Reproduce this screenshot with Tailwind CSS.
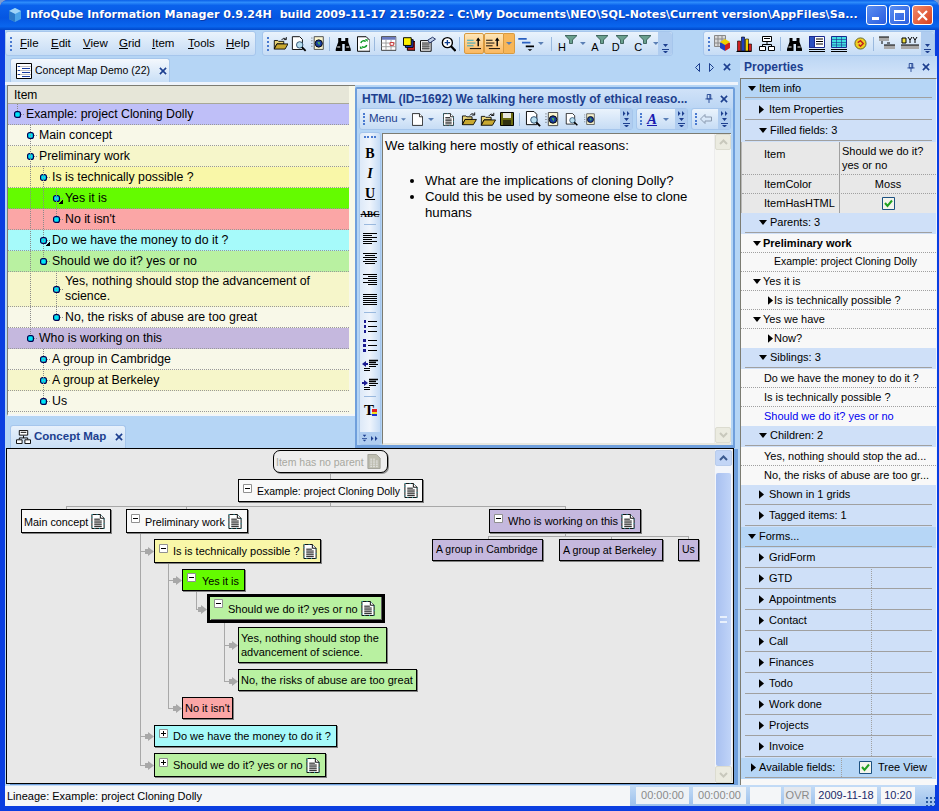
<!doctype html>
<html lang="en">
<head>
<meta charset="UTF-8">
<title>InfoQube Information Manager</title>
<script src="https://cdn.jsdelivr.net/npm/@tailwindcss/browser@4"></script>
</head>
<body class="w-[939px] h-[811px] overflow-hidden bg-[#7f9ccf] font-['Liberation_Sans',Arial,sans-serif] text-[10.5px] text-black">

<!-- Icon sprites -->
<svg class="hidden">
  <symbol id="tri-r" viewBox="0 0 6 10"><path d="M0 0l6 5-6 5z"/></symbol>
  <symbol id="tri-d" viewBox="0 0 10 6"><path d="M0 0h10L5 6z"/></symbol>
  <symbol id="caret" viewBox="0 0 6 3"><path d="M0 0h6L3 3z" fill="#5a7fb5"/></symbol>
  <symbol id="over" viewBox="0 0 7 9"><path d="M1 0h5L3.5 3zM0 5h7v1H0zM1 7h5L3.5 9.500z" fill="#1d3f8f"/></symbol>
  <symbol id="more" viewBox="0 0 7 5"><path d="M0 0l2.5 2.5L0 5zM4 0l2.5 2.5L4 5z" fill="#1d3f8f"/></symbol>
  <symbol id="x" viewBox="0 0 9 9"><path d="M1 1l7 7M8 1L1 8" stroke="#1d3f8f" stroke-width="1.8" fill="none"/></symbol>
  <symbol id="pin" viewBox="0 0 9 10"><path d="M2.5.5h4v5h-4zM.5 5.5h8M4.5 6v4M5.5 1v4" stroke="#1d3f8f" fill="none"/></symbol>
  <symbol id="doc" viewBox="0 0 14 16">
    <path d="M.5.5h9l4 4v11H.5z" fill="#fff" stroke="#000"/>
    <path d="M.5.5h9l4 4v11H.5z" fill="none" stroke="#20b0c0" stroke-dasharray="1 4"/>
    <path d="M9.5.5v4h4" fill="#fff" stroke="#000"/>
    <path d="M3 5.5h6M3 7.5h8M3 9.5h8M3 11.5h8M3 13.5h8" stroke="#000"/>
  </symbol>
  <symbol id="doc-g" viewBox="0 0 14 16">
    <path d="M.5.5h9l4 4v11H.5z" fill="#bdbdb0" stroke="#a0a098"/>
    <path d="M3 5.5h6M3 7.5h8M3 9.5h8M3 11.5h8M3 13.5h8" stroke="#e8e8e8" stroke-dasharray="2 1"/>
  </symbol>
  <symbol id="open" viewBox="0 0 18 16">
    <path d="M1.5 4.5h4l1 1h6v3h-8l-3 6z" fill="#e8d47a" stroke="#000"/>
    <path d="M4.5 8.5h13l-3.500 6H1.5z" fill="#c8a830" stroke="#000"/>
    <path d="M10 4c1.5-2.5 3.500-2.5 5-1M15.5.5v3h-3" fill="none" stroke="#000"/>
  </symbol>
  <symbol id="preview" viewBox="0 0 18 17">
    <path d="M1.5.5h8l3 3v11h-11z" fill="#fff" stroke="#000"/>
    <circle cx="9.5" cy="9.5" r="3.5" fill="#b8dff0" stroke="#2a4a6a"/>
    <path d="M12 12l4 4" stroke="#000" stroke-width="2"/>
  </symbol>
  <symbol id="globe-doc" viewBox="0 0 17 16">
    <path d="M.5 2h1M.5 5h1M.5 8h1M.5 11h1" stroke="#444"/>
    <path d="M3.5.5h10v14h-10z" fill="#fbf6d0" stroke="#444"/>
    <circle cx="8.5" cy="8" r="4" fill="#1a3ea0" stroke="#000"/>
    <path d="M7 6l3 1-1 3z" fill="#50c050"/>
  </symbol>
  <symbol id="binoc" viewBox="0 0 16 16">
    <path d="M3 2h3v3h4V2h3v4l2.5 7v2h-6V8H7v7H.5v-2L3 6z" fill="#000"/>
    <path d="M2 11h3M11 11h3" stroke="#fff"/>
  </symbol>
  <symbol id="doc-sync" viewBox="0 0 14 16">
    <path d="M.5.5h9l4 4v11H.5z" fill="#fff" stroke="#000"/>
    <path d="M4 7a3 3 0 0 1 5-1.5M10 9a3 3 0 0 1-5 1.5" stroke="#0a9a20" stroke-width="1.5" fill="none"/>
    <path d="M8 3h3v3zM6 13H3v-3z" fill="#0a9a20"/>
  </symbol>
  <symbol id="table" viewBox="0 0 17 16">
    <path d="M.5.5h16v15H.5z" fill="#fff" stroke="#333"/>
    <path d="M1 1h15v3H1z" fill="#6a7ac0"/>
    <path d="M.5 7.5h16M.5 11.5h16M5.5 4v11M11 4v11" stroke="#999"/>
    <path d="M10 7h4v3h-4z" fill="#fff" stroke="#c02020"/>
  </symbol>
  <symbol id="stack" viewBox="0 0 13 14">
    <path d="M4.5 4.5h8v9h-8z" fill="#d02020" stroke="#000"/>
    <path d="M2.5 2.5h8v8h-8z" fill="#2040d0" stroke="#000"/>
    <path d="M.5.5h8v8h-8z" fill="#fff000" stroke="#000"/>
  </symbol>
  <symbol id="props" viewBox="0 0 17 16">
    <path d="M.5 4.5h11v11H.5z" fill="#fff" stroke="#000"/>
    <path d="M2 7h8M2 9h8M2 11h8M2 13h8" stroke="#000"/>
    <path d="M8 4l5-3 3 2-6 4z" fill="#c0d0e8" stroke="#203060"/>
  </symbol>
  <symbol id="zoom" viewBox="0 0 17 17">
    <circle cx="7" cy="7" r="5.5" fill="#fff" stroke="#000" stroke-width="1.5"/>
    <path d="M4 7h6M7 4v6" stroke="#0a3a8a" stroke-width="1.5"/>
    <path d="M11 11l5 5" stroke="#000" stroke-width="2.5"/>
  </symbol>
  <symbol id="list-up" viewBox="0 0 16 14">
    <path d="M0 3.5h7M0 6.5h9M0 9.5h7" stroke="#20a0c0"/>
    <path d="M3 12.5h12" stroke="#000"/>
    <path d="M12 10V2" stroke="#000" stroke-width="1.5"/><path d="M9.5 4L12 .5 14.5 4z"/>
  </symbol>
  <symbol id="list-up2" viewBox="0 0 16 14">
    <path d="M0 3.5h7M0 6.5h9M0 9.5h7" stroke="#000"/>
    <path d="M3 12.5h12" stroke="#000"/>
    <path d="M12 10V2" stroke="#000" stroke-width="1.5"/><path d="M9.5 4L12 .5 14.5 4z"/>
  </symbol>
  <symbol id="steps" viewBox="0 0 17 15">
    <path d="M0 1h9v2H0z" fill="#2a60c0"/><path d="M4 5h9v2H4z" fill="#2a60c0"/><path d="M8 9h9v2H8z" fill="#000"/><path d="M10 13h5l-2.5 2z"/>
  </symbol>
  <symbol id="filter" viewBox="0 0 12 9"><path d="M0 .5h12L7.5 5v3.5h-3V5z" fill="#6aa08e" stroke="#2a5048" stroke-width=".8"/></symbol>
  <symbol id="cube" viewBox="0 0 18 17">
    <path d="M.5.5h11v11H.5zM4 .5v11M8 .5v11M.5 4h11M.5 8h11" fill="#d8d8d8" stroke="#888"/>
    <path d="M11 5l5 3v5l-5 3z" fill="#d02020"/><path d="M11 5l-5 3v5l5 3z" fill="#2040c0"/><path d="M11 4l5 3-5 3-5-3z" fill="#f0d000"/>
  </symbol>
  <symbol id="bars" viewBox="0 0 16 16">
    <path d="M.5 15.5h15" stroke="#000"/>
    <path d="M1.5 5h3v10h-3z" fill="#d02020" stroke="#000" stroke-width=".6"/>
    <path d="M5.5 1h3v14h-3z" fill="#2040c0" stroke="#000" stroke-width=".6"/>
    <path d="M9.5 3h3v12h-3z" fill="#f0d000" stroke="#000" stroke-width=".6"/>
    <path d="M12.5 8h3v7h-3z" fill="#d02020" stroke="#000" stroke-width=".6"/>
  </symbol>
  <symbol id="org" viewBox="0 0 16 15">
    <path d="M3.5.5h9v5h-9zM.5 10.5h6v4h-6zM9.5 10.5h6v4h-6z" fill="#fff" stroke="#000"/>
    <path d="M8 6v2.5M3.5 10V8.5h9V10M5 2.5h6" stroke="#000" fill="none"/>
  </symbol>
  <symbol id="form" viewBox="0 0 16 16">
    <path d="M.5.5h15v11H.5z" fill="#fff" stroke="#1a2a90"/>
    <path d="M.5.5h5v11h-5z" fill="#2a50c0" stroke="#1a2a90"/>
    <path d="M7 3h7M7 5.5h7M7 8h7M0 13.5h16M0 15.5h16" stroke="#000"/>
  </symbol>
  <symbol id="grid-c" viewBox="0 0 16 16">
    <path d="M.5.5h15v11H.5z" fill="#40e0e0" stroke="#1a2a90"/>
    <path d="M.5 3.5h15M.5 6.5h15M.5 9h15M5.5 0v11M10.5 0v11" stroke="#1a2a90" stroke-width=".6"/>
    <path d="M0 13.5h16M0 15.5h16" stroke="#000"/>
  </symbol>
  <symbol id="coin" viewBox="0 0 14 14">
    <circle cx="7" cy="7" r="6" fill="#f0d020" stroke="#606020"/>
    <path d="M4 6l3-2 3 3-3 3-2-2" stroke="#c02020" stroke-width="1.5" fill="none"/>
  </symbol>
  <symbol id="fld-a" viewBox="0 0 16 15">
    <path d="M0 1h10v4H0zM5 9h11v4H5z" fill="#a8a8a8"/><path d="M0 1h10M5 9h11M3 5v3M8 7h3" stroke="#000"/>
  </symbol>
  <symbol id="fld-b" viewBox="0 0 18 15">
    <path d="M0 9h18v4H0z" fill="#a8a8a8"/><path d="M0 9h18" stroke="#000"/>
    <path d="M1 7V2h4v5z" fill="#f0e040" stroke="#000"/>
    <path d="M7 1l2 3 2-3M9 4v3M12 1l2 3 2-3M14 4v3" stroke="#000" fill="none"/>
  </symbol>
  <symbol id="tabgrid" viewBox="0 0 16 16">
    <path d="M.5.5h15v15H.5z" fill="#fff" stroke="#000"/>
    <path d="M1 3.5h14M1 7.5h14M1 11.5h14" stroke="#c0c0c0"/>
    <path d="M2 3.5h2M6 5.5h8M2 7.5h2M6 9.5h8M2 11.5h2M6 13.5h8" stroke="#1a3ea0" stroke-width="1.2"/>
  </symbol>
  <symbol id="page" viewBox="0 0 14 16">
    <path d="M.5.5h9l4 4v11H.5z" fill="#fff" stroke="#000"/><path d="M9.5.5v4h4" fill="#fff" stroke="#000"/>
  </symbol>
  <symbol id="tree-dot" viewBox="0 0 7 7"><rect x=".6" y=".6" width="5.8" height="5.8" rx="2" fill="#00e4f8" stroke="#000050" stroke-width="1.2"/></symbol>
  <symbol id="minus" viewBox="0 0 9 9"><path d="M.5.5h8v8h-8z" fill="#fff" stroke="#909090"/><path d="M2 4.5h5" stroke="#000"/></symbol>
  <symbol id="plus" viewBox="0 0 9 9"><path d="M.5.5h8v8h-8z" fill="#fff" stroke="#909090"/><path d="M2 4.5h5M4.5 2v5" stroke="#000"/></symbol>
  <symbol id="check" viewBox="0 0 13 13"><path d="M.5.5h12v12H.5z" fill="#f4f4ec" stroke="#1c5180"/><path d="M3 6l2.5 3L10 3.5" stroke="#21a121" stroke-width="2" fill="none"/></symbol>
  <symbol id="chev-u" viewBox="0 0 9 6"><path d="M1 5l3.5-3.5L8 5" stroke="currentColor" stroke-width="2" fill="none"/></symbol>
  <symbol id="chev-d" viewBox="0 0 9 6"><path d="M1 1l3.5 3.5L8 1" stroke="currentColor" stroke-width="2" fill="none"/></symbol>
  <symbol id="al-l" viewBox="0 0 14 12"><path d="M0 .5h14M0 2.5h9M0 4.5h14M0 6.5h9M0 8.5h14M0 10.5h9" stroke="#000"/></symbol>
  <symbol id="al-c" viewBox="0 0 14 12"><path d="M0 .5h14M2 2.5h10M0 4.5h14M2 6.5h10M0 8.5h14M2 10.5h10" stroke="#000"/></symbol>
  <symbol id="al-r" viewBox="0 0 14 12"><path d="M0 .5h14M5 2.5h9M0 4.5h14M5 6.5h9M0 8.5h14M5 10.5h9" stroke="#000"/></symbol>
  <symbol id="al-j" viewBox="0 0 14 12"><path d="M0 .5h14M0 2.5h14M0 4.5h14M0 6.5h14M0 8.5h14M0 10.5h14" stroke="#000"/></symbol>
  <symbol id="numlist" viewBox="0 0 14 13"><path d="M1 0h2v3H1zM1 5h2v3H1zM1 10h2v3H1z" fill="#1a1a90"/><path d="M5 1.5h9M5 6.5h9M5 11.5h9" stroke="#000"/></symbol>
  <symbol id="bullist" viewBox="0 0 14 13"><path d="M0 0h3v3H0zM0 5h3v3H0zM0 10h3v3H0z" fill="#1a1a90"/><path d="M5 1.5h9M5 6.5h9M5 11.5h9" stroke="#000"/></symbol>
  <symbol id="outdent" viewBox="0 0 16 14"><path d="M7 2.5h9M7 4.5h7" stroke="#000" stroke-width="1.5"/><path d="M7 6.5h9M7 8.5h7M2 10.5h6M2 12.5h6" stroke="#000"/><path d="M0 6l4-3v2h2v2H4v2z" fill="#1a1a90"/></symbol>
  <symbol id="indent" viewBox="0 0 16 14"><path d="M7 2.5h9M7 4.5h7" stroke="#000" stroke-width="1.5"/><path d="M7 6.5h9M7 8.5h7M2 10.5h6M2 12.5h6" stroke="#000"/><path d="M6 6L2 3v2H0v2h2v2z" fill="#1a1a90"/></symbol>
</svg>

<div class="flex flex-col h-full rounded-t-[8px] bg-[#0a3ee0] overflow-hidden">

  <!-- Title bar -->
  <div class="h-[30px] flex items-center shrink-0 pl-[7px] pr-[6px] bg-[linear-gradient(#0a5fe8,#2d8cfb_8%,#0a62ec_18%,#0556e2_60%,#0a66ee_88%,#0046c8)]">
    <svg class="w-[16px] h-[16px] shrink-0" viewBox="0 0 16 16"><path d="M8 1l6 3v8l-6 3-6-3V4z" fill="#4aa3e8"/><path d="M8 1l6 3-6 3-6-3z" fill="#9fd4f8"/><path d="M8 7v8l-6-3V4z" fill="#2a78c8"/></svg>
    <div class="ml-[3px] flex-1 whitespace-nowrap text-white font-['DejaVu_Sans',sans-serif] font-bold text-[11.1px] [text-shadow:1px_1px_#0a3aa8]">InfoQube Information Manager 0.9.24H&nbsp; build 2009-11-17 21:50:22 - C:\My Documents\NEO\SQL-Notes\Current version\AppFiles\Sa...</div>
    <div class="flex gap-[2px] ml-[6px]">
      <div class="w-[21px] h-[20px] rounded-[3px] border border-white bg-[linear-gradient(135deg,#5a8ef0,#2a5de0)] flex items-end justify-start pl-[5px] pb-[4px]"><div class="w-[7px] h-[3px] bg-white"></div></div>
      <div class="w-[21px] h-[20px] rounded-[3px] border border-white bg-[linear-gradient(135deg,#5a8ef0,#2a5de0)] flex items-center justify-center"><div class="w-[11px] h-[11px] border border-white border-t-[3px]"></div></div>
      <div class="w-[21px] h-[20px] rounded-[3px] border border-white bg-[linear-gradient(135deg,#f08a6a,#d8401e)] flex items-center justify-center"><svg class="w-[11px] h-[11px]" viewBox="0 0 11 11"><path d="M1 1l9 9M10 1l-9 9" stroke="#fff" stroke-width="2.2"/></svg></div>
    </div>
  </div>

  <!-- Client area -->
  <div class="ml-[5px] mr-[4px] h-[776px] shrink-0 bg-[#b5d5f5] flex flex-col">

    <!-- Toolbars -->
    <div class="h-[26px] shrink-0 pt-[1px] flex items-start">
      <div class="w-[251px] h-[25px] rounded-[3px] border border-[#a6c6ec] bg-[linear-gradient(#eaf3fc,#c6dcf5)] flex items-center text-[11.5px]">
        <div class="w-[2px] h-[14px] ml-[4px] border-l-2 border-dotted border-[#4a7ad0]"></div>
        <span class="ml-[8px] w-[31px]"><u>F</u>ile</span>
        <span class="w-[32px]"><u>E</u>dit</span>
        <span class="w-[36px]"><u>V</u>iew</span>
        <span class="w-[33px]"><u>G</u>rid</span>
        <span class="w-[36px]"><u>I</u>tem</span>
        <span class="w-[38px]"><u>T</u>ools</span>
        <span><u>H</u>elp</span>
      </div>
      <div class="ml-[6px] w-[411px] h-[25px] rounded-[3px] border border-[#a6c6ec] bg-[linear-gradient(#eaf3fc,#c6dcf5)] flex items-center relative">
        <div class="w-[2px] h-[14px] ml-[4px] border-l-2 border-dotted border-[#4a7ad0]"></div>
        <svg class="ml-[4px] w-[16px] h-[15px]"><use href="#open"/></svg>
        <svg class="ml-[3px] w-[17px] h-[16px]"><use href="#preview"/></svg>
        <svg class="ml-[3px] w-[16px] h-[15px]"><use href="#globe-doc"/></svg>
        <div class="ml-[3px] w-px h-[14px] bg-[#9ab9de]"></div>
        <svg class="ml-[5px] w-[17px] h-[16px]"><use href="#binoc"/></svg>
        <svg class="ml-[5px] w-[14px] h-[16px]"><use href="#doc-sync"/></svg>
        <div class="ml-[4px] w-px h-[14px] bg-[#9ab9de]"></div>
        <svg class="ml-[6px] w-[16px] h-[15px]"><use href="#table"/></svg>
        <svg class="ml-[6px] w-[13px] h-[14px]"><use href="#stack"/></svg>
        <svg class="ml-[5px] w-[17px] h-[16px]"><use href="#props"/></svg>
        <svg class="ml-[4px] w-[16px] h-[16px]"><use href="#zoom"/></svg>
        <div class="ml-[3px] w-px h-[14px] bg-[#9ab9de]"></div>
        <div class="ml-[4px] w-[20px] h-[21px] rounded-[2px] border border-[#d89a40] bg-[linear-gradient(#fde6b8,#fbb860)] flex items-center justify-center"><svg class="w-[15px] h-[13px]"><use href="#list-up"/></svg></div>
        <div class="w-[21px] h-[21px] rounded-l-[2px] border border-[#d89a40] bg-[linear-gradient(#fde6b8,#fbb860)] flex items-center justify-center"><svg class="w-[15px] h-[13px]"><use href="#list-up2"/></svg></div>
        <div class="w-[11px] h-[21px] rounded-r-[2px] border border-l-0 border-[#d89a40] bg-[#f7b658] flex items-center justify-center"><svg class="w-[6px] h-[3px]"><use href="#caret"/></svg></div>
        <svg class="ml-[3px] w-[17px] h-[14px]"><use href="#steps"/></svg>
        <svg class="ml-[4px] w-[6px] h-[3px]"><use href="#caret"/></svg>
        <div class="ml-[7px] w-px h-[14px] bg-[#9ab9de]"></div>
        <div class="ml-[6px] w-[20px] h-[18px] relative"><svg class="absolute right-0 top-0 w-[12px] h-[9px]"><use href="#filter"/></svg><span class="absolute left-0 bottom-0 text-[11px] leading-none">H</span></div>
        <svg class="ml-[3px] w-[6px] h-[3px]"><use href="#caret"/></svg>
        <div class="ml-[5px] w-[17px] h-[18px] relative"><svg class="absolute right-0 top-0 w-[12px] h-[9px]"><use href="#filter"/></svg><span class="absolute left-0 bottom-0 text-[11px] leading-none">A</span></div>
        <div class="ml-[4px] w-[17px] h-[18px] relative"><svg class="absolute right-0 top-0 w-[12px] h-[9px]"><use href="#filter"/></svg><span class="absolute left-0 bottom-0 text-[11px] leading-none">D</span></div>
        <div class="ml-[6px] w-[17px] h-[18px] relative"><svg class="absolute right-0 top-0 w-[12px] h-[9px]"><use href="#filter"/></svg><span class="absolute left-0 bottom-0 text-[11px] leading-none">C</span></div>
        <svg class="ml-[2px] w-[6px] h-[3px]"><use href="#caret"/></svg>
        <div class="ml-auto w-[14px] h-[23px] bg-[#b0cdf0] rounded-r-[3px] flex items-end justify-center pb-[2px]"><svg class="w-[7px] h-[9px]"><use href="#over"/></svg></div>
      </div>
      <div class="ml-[30px] w-[232px] h-[25px] rounded-[3px] border border-[#a6c6ec] bg-[linear-gradient(#eaf3fc,#c6dcf5)] flex items-center">
        <div class="w-[2px] h-[14px] ml-[4px] border-l-2 border-dotted border-[#4a7ad0]"></div>
        <svg class="ml-[4px] w-[18px] h-[17px]"><use href="#cube"/></svg>
        <svg class="ml-[4px] w-[16px] h-[16px]"><use href="#bars"/></svg>
        <svg class="ml-[7px] w-[16px] h-[15px]"><use href="#org"/></svg>
        <div class="ml-[5px] w-px h-[14px] bg-[#9ab9de]"></div>
        <svg class="ml-[5px] w-[17px] h-[16px]"><use href="#binoc"/></svg>
        <svg class="ml-[6px] w-[16px] h-[16px]"><use href="#form"/></svg>
        <svg class="ml-[6px] w-[16px] h-[16px]"><use href="#grid-c"/></svg>
        <svg class="ml-[7px] w-[13px] h-[13px]"><use href="#coin"/></svg>
        <div class="ml-[6px] w-px h-[14px] bg-[#9ab9de]"></div>
        <svg class="ml-[5px] w-[16px] h-[15px]"><use href="#fld-a"/></svg>
        <svg class="ml-[6px] w-[18px] h-[15px]"><use href="#fld-b"/></svg>
        <div class="ml-auto w-[13px] h-[23px] bg-[#b0cdf0] rounded-r-[3px] flex items-end justify-center pb-[2px]"><svg class="w-[7px] h-[9px]"><use href="#over"/></svg></div>
      </div>
    </div>

    <!-- Middle -->
    <div class="h-[729px] shrink-0 flex">
      <div class="w-[733px] shrink-0 flex flex-col">

        <div class="h-[392px] shrink-0 flex flex-col">
          <!-- Document tabs -->
          <div class="h-[29px] shrink-0 flex items-end pl-[5px] pr-[5px] border-b-[3px] border-[#eef4fc] relative">
            <div class="w-[160px] h-[24px] rounded-t-[3px] border border-b-0 border-[#a6c6ec] bg-[linear-gradient(#f4f8fd,#c9dff6)] flex items-center pl-[5px] text-[10.5px] whitespace-nowrap">
              <svg class="w-[16px] h-[16px]"><use href="#tabgrid"/></svg>
              <span class="ml-[3px]">Concept Map Demo (22)</span>
              <svg class="ml-[9px] w-[8px] h-[8px]"><use href="#x"/></svg>
            </div>
            <div class="ml-auto self-start h-[22px] flex items-center gap-[9px] pr-[2px]">
              <svg class="w-[5px] h-[9px]" viewBox="0 0 5 9"><path d="M4.5.5L.5 4.5l4 4z" fill="none" stroke="#1d3f8f"/></svg>
              <svg class="w-[5px] h-[9px]" viewBox="0 0 5 9"><path d="M.5.5l4 4-4 4z" fill="none" stroke="#1d3f8f"/></svg>
              <svg class="w-[8px] h-[8px]"><use href="#x"/></svg>
            </div>
          </div>

          <div class="flex-1 flex min-h-0">
            <!-- Item grid + map tab -->
            <div class="w-[350px] shrink-0 flex flex-col">
              <div class="ml-[2px] h-[331px] bg-[#f8f8e8] border-t border-l border-[#7c7c72] border-b-2 border-b-[#f4f6f8]">
                <div class="h-[18px] w-[341px] bg-[#e6e6d8] border-b border-[#a8a898] flex items-center pl-[6px] text-[12px]">Item</div>

                <div class="w-[341px] text-[12.3px] relative">
                  <div class="h-[21px] flex items-center bg-[#bfbff8] border-b border-dotted border-[#999] pl-[6px]"><svg class="w-[7px] h-[7px]"><use href="#tree-dot"/></svg><span class="ml-[5px]">Example: project Cloning Dolly</span></div>
                  <div class="h-[21px] flex items-center bg-[#f8f8e8] border-b border-dotted border-[#999] pl-[19px]"><svg class="w-[7px] h-[7px]"><use href="#tree-dot"/></svg><span class="ml-[5px]">Main concept</span></div>
                  <div class="h-[21px] flex items-center bg-[#f6f6ca] border-b border-dotted border-[#999] pl-[19px]"><svg class="w-[7px] h-[7px]"><use href="#tree-dot"/></svg><span class="ml-[5px]">Preliminary work</span></div>
                  <div class="h-[21px] flex items-center bg-[#f9f7a8] border-b border-dotted border-[#999] pl-[32px]"><svg class="w-[7px] h-[7px]"><use href="#tree-dot"/></svg><span class="ml-[5px]">Is is technically possible ?</span></div>
                  <div class="h-[21px] flex items-center bg-[#64fb00] border-b border-dotted border-[#999] pl-[45px]"><svg class="w-[7px] h-[7px]"><use href="#tree-dot"/></svg><span class="ml-[5px]">Yes it is</span></div>
                  <div class="h-[21px] flex items-center bg-[#fba6a6] border-b border-dotted border-[#999] pl-[45px]"><svg class="w-[7px] h-[7px]"><use href="#tree-dot"/></svg><span class="ml-[5px]">No it isn't</span></div>
                  <div class="h-[21px] flex items-center bg-[#a6fafa] border-b border-dotted border-[#999] pl-[32px]"><svg class="w-[7px] h-[7px]"><use href="#tree-dot"/></svg><span class="ml-[5px]">Do we have the money to do it ?</span></div>
                  <div class="h-[21px] flex items-center bg-[#b9f1a1] border-b border-dotted border-[#999] pl-[32px]"><svg class="w-[7px] h-[7px]"><use href="#tree-dot"/></svg><span class="ml-[5px]">Should we do it? yes or no</span></div>
                  <div class="h-[35px] flex items-center bg-[#f6f6ca] border-b border-dotted border-[#999] pl-[45px] pr-[20px]"><svg class="w-[7px] h-[7px] shrink-0"><use href="#tree-dot"/></svg><span class="ml-[5px] leading-[15px]">Yes, nothing should stop the advancement of science.</span></div>
                  <div class="h-[21px] flex items-center bg-[#f8f8e8] border-b border-dotted border-[#999] pl-[45px]"><svg class="w-[7px] h-[7px]"><use href="#tree-dot"/></svg><span class="ml-[5px]">No, the risks of abuse are too great</span></div>
                  <div class="h-[21px] flex items-center bg-[#c5b8de] border-b border-dotted border-[#999] pl-[19px]"><svg class="w-[7px] h-[7px]"><use href="#tree-dot"/></svg><span class="ml-[5px]">Who is working on this</span></div>
                  <div class="h-[21px] flex items-center bg-[#f8f8e8] border-b border-dotted border-[#999] pl-[32px]"><svg class="w-[7px] h-[7px]"><use href="#tree-dot"/></svg><span class="ml-[5px]">A group in Cambridge</span></div>
                  <div class="h-[21px] flex items-center bg-[#f6f6ca] border-b border-dotted border-[#999] pl-[32px]"><svg class="w-[7px] h-[7px]"><use href="#tree-dot"/></svg><span class="ml-[5px]">A group at Berkeley</span></div>
                  <div class="h-[21px] flex items-center bg-[#f8f8e8] border-b border-dotted border-[#999] pl-[32px]"><svg class="w-[7px] h-[7px]"><use href="#tree-dot"/></svg><span class="ml-[5px]">Us</span></div>
                  <!-- Tree connector lines, drawn over the rows -->
                  <svg class="absolute left-0 top-0 w-[341px] h-[309px]" viewBox="8 104 341 309" shape-rendering="crispEdges">
                    <path d="M17.5 104v8M30.5 125v210M43.5 166v92M43.5 349v52M56.5 187v30M56.5 271v46" stroke="#8a8a8a" stroke-dasharray="1 1" fill="none"/>
                    <path d="M21 114.5h4M34 135.5h4M34 156.5h4M47 177.5h4M60 198.5h4M60 219.5h4M47 240.5h4M47 261.5h4M60 289.5h4M60 317.5h4M34 338.5h4M47 359.5h4M47 380.5h4M47 401.5h4" stroke="#8a8a8a" stroke-dasharray="1 1" fill="none"/>
                    <path d="M62.5 199.5v4h-4zM49.5 241.5v4h-4z" fill="#000"/>
                  </svg>
                </div>
              </div>
              <!-- Concept Map tab -->
              <div class="h-[32px] flex items-end pl-[5px]">
                <div class="w-[116px] h-[23px] rounded-t-[3px] border border-b-0 border-[#a6c6ec] bg-[linear-gradient(#e8f1fb,#c9dff6)] flex items-center pl-[5px] text-[#1d3f8f] font-bold text-[11.5px]">
                  <svg class="w-[15px] h-[14px]"><use href="#org"/></svg>
                  <span class="ml-[3px]">Concept Map</span>
                  <svg class="ml-[9px] w-[8px] h-[8px]"><use href="#x"/></svg>
                </div>
              </div>
            </div>

            <!-- HTML pane -->
            <div class="w-[380px] shrink-0 mt-[2px] border-2 border-b-[3px] border-[#6f9fdc] rounded-t-[2px] flex flex-col">
              <div class="h-[19px] shrink-0 flex items-center pl-[5px] pr-[5px] bg-[linear-gradient(#d0e2f8,#bcd6f4)] font-bold text-[12px] text-[#1d3f8f] whitespace-nowrap">
                <span class="flex-1 overflow-hidden">HTML (ID=1692) We talking here mostly of ethical reaso...</span>
                <svg class="ml-[6px] w-[8px] h-[9px]"><use href="#pin"/></svg>
                <svg class="ml-[7px] w-[8px] h-[8px]"><use href="#x"/></svg>
              </div>
              <div class="h-[23px] shrink-0 flex pl-[2px] gap-[3px] pb-[1px]">
                <div class="w-[274px] rounded-[3px] border border-[#a6c6ec] bg-[linear-gradient(#eaf3fc,#c6dcf5)] flex items-center relative">
                  <div class="w-[2px] h-[12px] ml-[3px] border-l-2 border-dotted border-[#4a7ad0]"></div>
                  <span class="ml-[4px] text-[#1d3f8f] text-[11.5px]">Menu</span>
                  <svg class="ml-[3px] w-[5px] h-[3px]"><use href="#caret"/></svg>
                  <svg class="ml-[6px] w-[11px] h-[13px]"><use href="#page"/></svg>
                  <svg class="ml-[5px] w-[6px] h-[3px]"><use href="#caret"/></svg>
                  <svg class="ml-[9px] w-[11px] h-[13px]"><use href="#doc"/></svg>
                  <svg class="ml-[7px] w-[16px] h-[14px]"><use href="#open"/></svg>
                  <svg class="ml-[3px] w-[16px] h-[15px]"><use href="#open"/></svg>
                  <svg class="ml-[4px] w-[14px] h-[14px]" viewBox="0 0 14 14"><path d="M.5.5h13v13H.5z" fill="#6a6a10" stroke="#000"/><path d="M3 1h8v5H3z" fill="#e8e8e0"/><path d="M3 8h8v5H3z" fill="#303010"/></svg>
                  <div class="ml-[5px] w-px h-[13px] bg-[#9ab9de]"></div>
                  <svg class="ml-[5px] w-[17px] h-[16px]"><use href="#preview"/></svg>
                  <svg class="ml-[3px] w-[16px] h-[15px]"><use href="#globe-doc"/></svg>
                  <svg class="ml-[4px] w-[14px] h-[13px]"><use href="#preview"/></svg>
                  <svg class="ml-[5px] w-[13px] h-[15px]"><use href="#globe-doc"/></svg>
                  <div class="ml-auto w-[12px] h-full bg-[#b0cdf0] flex flex-col items-center justify-between py-[2px]"><svg class="w-[7px] h-[5px]"><use href="#more"/></svg><svg class="w-[7px] h-[9px]"><use href="#over"/></svg></div>
                </div>
                <div class="w-[52px] rounded-[3px] border border-[#a6c6ec] bg-[linear-gradient(#eaf3fc,#c6dcf5)] flex items-center">
                  <div class="w-[2px] h-[12px] ml-[3px] border-l-2 border-dotted border-[#4a7ad0]"></div>
                  <span class="ml-[5px] text-[#1a1ab0] font-['Liberation_Serif',serif] italic font-bold text-[15px] leading-none underline">A</span>
                  <svg class="ml-[6px] w-[6px] h-[3px]"><use href="#caret"/></svg>
                  <div class="ml-auto w-[12px] h-full bg-[#b0cdf0] flex flex-col items-center justify-between py-[2px]"><svg class="w-[7px] h-[5px]"><use href="#more"/></svg><svg class="w-[7px] h-[9px]"><use href="#over"/></svg></div>
                </div>
                <div class="w-[40px] rounded-[3px] border border-[#a6c6ec] bg-[linear-gradient(#eaf3fc,#c6dcf5)] flex items-center">
                  <div class="w-[2px] h-[12px] ml-[3px] border-l-2 border-dotted border-[#4a7ad0]"></div>
                  <svg class="ml-[3px] w-[12px] h-[10px]" viewBox="0 0 12 10"><path d="M5 .5L.5 5 5 9.5V7h6.5V3H5z" fill="none" stroke="#8a9ab0"/></svg>
                  <div class="ml-auto w-[12px] h-full bg-[#b0cdf0] flex flex-col items-center justify-between py-[2px]"><svg class="w-[7px] h-[5px]"><use href="#more"/></svg><svg class="w-[7px] h-[9px]"><use href="#over"/></svg></div>
                </div>
              </div>
              <div class="flex-1 flex min-h-0 pl-[2px] pr-[2px]">
                <!-- Format toolbar -->
                <div class="w-[22px] shrink-0 mt-[1px] rounded-[3px] border border-[#a6c6ec] bg-[linear-gradient(90deg,#dde9f8,#eef4fc,#c6dcf5)] flex flex-col items-center relative">
                  <div class="mt-[3px] h-[2px] w-[12px] border-t-2 border-dotted border-[#4a7ad0]"></div>
                  <span class="mt-[8px] h-[20px] font-['Liberation_Serif',serif] font-bold text-[14px] leading-[16px]">B</span>
                  <span class="h-[20px] font-['Liberation_Serif',serif] font-bold italic text-[14px] leading-[16px]">I</span>
                  <span class="h-[20px] font-['Liberation_Serif',serif] font-bold underline text-[14px] leading-[16px]">U</span>
                  <span class="h-[14px] font-['Liberation_Serif',serif] font-bold line-through text-[9px] leading-[16px]">ABC</span>
                  <div class="mt-[4px] w-[12px] h-px bg-[#9ab9de]"></div>
                  <svg class="mt-[8px] w-[14px] h-[12px]"><use href="#al-l"/></svg>
                  <svg class="mt-[8px] w-[14px] h-[12px]"><use href="#al-c"/></svg>
                  <svg class="mt-[9px] w-[14px] h-[12px]"><use href="#al-r"/></svg>
                  <svg class="mt-[8px] w-[14px] h-[12px]"><use href="#al-j"/></svg>
                  <div class="mt-[6px] w-[12px] h-px bg-[#9ab9de]"></div>
                  <svg class="mt-[7px] w-[14px] h-[13px]"><use href="#numlist"/></svg>
                  <svg class="mt-[6px] w-[14px] h-[13px]"><use href="#bullist"/></svg>
                  <svg class="mt-[6px] w-[16px] h-[14px]"><use href="#outdent"/></svg>
                  <svg class="mt-[5px] w-[16px] h-[14px]"><use href="#indent"/></svg>
                  <div class="mt-[5px] w-[12px] h-px bg-[#9ab9de]"></div>
                  <span class="mt-[5px] h-[18px] ml-[-2px] font-['Liberation_Serif',serif] font-bold text-[15px] leading-[16px] relative">T<span class="absolute left-[8px] top-[7px] w-[5px] h-[7px] bg-[linear-gradient(#e02020_40%,#f0e020_40%,#f0e020_70%,#2030d0_70%)]"></span></span>
                  <div class="absolute left-0 right-0 bottom-0 h-[12px] bg-[#b0cdf0] flex items-center justify-center gap-[4px]"><svg class="w-[5px] h-[8px]"><use href="#over"/></svg><svg class="w-[7px] h-[5px]"><use href="#more"/></svg></div>
                </div>
                <!-- Editor -->
                <div class="ml-[1px] flex-1 mt-[2px] border-l border-t border-[#7c7c72] bg-[#f8f8f8] flex border-b-2 border-b-[#e8e8e0]">
                  <div class="flex-1 pl-[2px] text-[13.2px] leading-[16px]">
                    <p class="mt-[4px]">We talking here mostly of ethical reasons:</p>
                    <ul class="mt-[19px] ml-[40px] list-disc">
                      <li>What are the implications of cloning Dolly?</li>
                      <li class="pr-[8px]">Could this be used by someone else to clone humans</li>
                    </ul>
                  </div>
                  <div class="w-[17px] shrink-0 border-l border-[#ececec] bg-[#f6f6f2] flex flex-col justify-between">
                    <div class="h-[16px] rounded-[2px] border border-[#dcdcd0] bg-[#ebebe0] flex items-center justify-center text-[#c8c8bc]"><svg class="w-[9px] h-[6px]"><use href="#chev-u"/></svg></div>
                    <div class="h-[16px] rounded-[2px] border border-[#dcdcd0] bg-[#ebebe0] flex items-center justify-center text-[#c8c8bc]"><svg class="w-[9px] h-[6px]"><use href="#chev-d"/></svg></div>
                  </div>
                </div>
              </div>
            </div>
          </div>
        </div>

        <!-- Concept map -->
        <div class="ml-[1px] h-[336px] w-[728px] shrink-0 relative overflow-visible border border-black bg-[#e8e8e8] flex justify-end text-[11px] shadow-[4px_1px_0_#6f9fdc]">
          <svg class="absolute left-0 top-0 w-[709px] h-[334px]" viewBox="7 449 709 334" shape-rendering="crispEdges">
            <path d="M330 473v6M330 502v4M66 506.5h499M66 506v3M186 506v3M565 506v3M140 533v232M168 563v145M196 591v18M224 623v58M565 533v3M488 536.5h200M488 536v3M611 536v3M688 536v3" stroke="#a8a8a8" fill="none"/>
            <path d="M140 551.5h9M140 736.5h9M140 765.5h9M168 580.5h9M168 708.5h9M196 609.5h6M224 645.5h9M224 681.5h9" stroke="#a8a8a8" fill="none"/>
            <path d="M145 549h3v5h-3zM145 734h3v5h-3zM145 763h3v5h-3zM173 578h3v5h-3zM173 706h3v5h-3zM198 607h3v5h-3zM229 643h3v5h-3zM229 679h3v5h-3z" fill="#a8a8a8"/>
            <g fill="#a8a8a8" shape-rendering="auto">
              <path d="M148 547l6 4.5-6 4.5zM148 732l6 4.5-6 4.5zM148 761l6 4.5-6 4.5zM176 576l6 4.5-6 4.5zM176 704l6 4.5-6 4.5zM201 605l6 4.5-6 4.5zM232 641l6 4.5-6 4.5zM232 677l6 4.5-6 4.5z"/>
            </g>
          </svg>

          <div class="absolute left-[266px] top-[1px] w-[115px] h-[23px] rounded-[7px] border border-black bg-[#eeeeee] flex items-center pl-[2px] text-[10.5px] text-[#a8a8a0] shadow-[1px_1px_0_#909090]"><span class="pt-[2px] whitespace-nowrap">Item has no parent</span><svg class="ml-[3px] w-[14px] h-[15px]"><use href="#doc-g"/></svg></div>

          <div class="absolute left-[231px] top-[30px] w-[185px] h-[23px] border border-black bg-[#f8f8f8] shadow-[1px_1px_0_#808080] pl-[4px] flex items-center text-[10.5px]"><svg class="self-start mt-[4px] w-[9px] h-[9px] shrink-0"><use href="#minus"/></svg><span class="ml-[5px] pt-[2px] whitespace-nowrap">Example: project Cloning Dolly</span><svg class="ml-[4px] w-[14px] h-[15px]"><use href="#doc"/></svg></div>

          <div class="absolute left-[14px] top-[60px] w-[90px] h-[24px] border border-black bg-[#f8f8f8] shadow-[1px_1px_0_#808080] pl-[2px] flex items-center text-[10.8px]"><span class="pt-[2px] whitespace-nowrap">Main concept</span><svg class="ml-[3px] w-[14px] h-[15px]"><use href="#doc"/></svg></div>

          <div class="absolute left-[119px] top-[60px] w-[122px] h-[24px] border border-black bg-[#f8f8f8] shadow-[1px_1px_0_#808080] pl-[4px] flex items-center text-[10.8px]"><svg class="self-start mt-[4px] w-[9px] h-[9px] shrink-0"><use href="#minus"/></svg><span class="ml-[5px] pt-[2px] whitespace-nowrap">Preliminary work</span><svg class="ml-[3px] w-[14px] h-[15px]"><use href="#doc"/></svg></div>

          <div class="absolute left-[147px] top-[90px] w-[167px] h-[24px] border border-black bg-[#f9f7a8] shadow-[1px_1px_0_#808080] pl-[4px] flex items-center"><svg class="self-start mt-[4px] w-[9px] h-[9px] shrink-0"><use href="#minus"/></svg><span class="ml-[5px] whitespace-nowrap">Is is technically possible ?</span><svg class="ml-[3px] w-[14px] h-[15px]"><use href="#doc"/></svg></div>

          <div class="absolute left-[175px] top-[120px] w-[63px] h-[22px] border border-black bg-[#64fb00] shadow-[1px_1px_0_#808080] pl-[4px] flex items-center text-[10.8px]"><svg class="self-start mt-[3px] w-[9px] h-[9px] shrink-0"><use href="#minus"/></svg><span class="ml-[6px] pt-[2px] whitespace-nowrap">Yes it is</span></div>

          <div class="absolute left-[200px] top-[145px] w-[178px] h-[29px] border-[3px] border-black bg-[#b9f1a1] pl-[1px] flex items-center"><div class="w-full h-full border-b border-r border-[#606060] flex items-center pl-[3px]"><svg class="self-start mt-[2px] w-[9px] h-[9px] shrink-0"><use href="#minus"/></svg><span class="ml-[5px] pt-[2px] whitespace-nowrap">Should we do it? yes or no</span><svg class="ml-[3px] w-[14px] h-[15px]"><use href="#doc"/></svg></div></div>

          <div class="absolute left-[231px] top-[178px] w-[149px] h-[36px] border border-black bg-[#b9f1a1] shadow-[1px_1px_0_#808080] pl-[2px] leading-[14px] flex items-center"><span>Yes, nothing should stop the advancement of science.</span></div>

          <div class="absolute left-[231px] top-[220px] w-[179px] h-[22px] border border-black bg-[#b9f1a1] shadow-[1px_1px_0_#808080] pl-[2px] flex items-center"><span class="whitespace-nowrap">No, the risks of abuse are too great</span></div>

          <div class="absolute left-[175px] top-[248px] w-[51px] h-[22px] border border-black bg-[#fba6a6] shadow-[1px_1px_0_#808080] pl-[2px] flex items-center"><span class="whitespace-nowrap">No it isn't</span></div>

          <div class="absolute left-[147px] top-[276px] w-[183px] h-[22px] border border-black bg-[#a6fafa] shadow-[1px_1px_0_#808080] pl-[4px] flex items-center"><svg class="self-start mt-[3px] w-[9px] h-[9px] shrink-0"><use href="#plus"/></svg><span class="ml-[5px] whitespace-nowrap">Do we have the money to do it ?</span></div>

          <div class="absolute left-[147px] top-[304px] w-[172px] h-[24px] border border-black bg-[#b9f1a1] shadow-[1px_1px_0_#808080] pl-[4px] flex items-center"><svg class="self-start mt-[4px] w-[9px] h-[9px] shrink-0"><use href="#plus"/></svg><span class="ml-[5px] whitespace-nowrap">Should we do it? yes or no</span><svg class="ml-[3px] w-[14px] h-[15px]"><use href="#doc"/></svg></div>

          <div class="absolute left-[482px] top-[60px] w-[152px] h-[24px] border border-black bg-[#c5b8de] shadow-[1px_1px_0_#808080] pl-[4px] flex items-center"><svg class="self-start mt-[4px] w-[9px] h-[9px] shrink-0"><use href="#minus"/></svg><span class="ml-[5px] whitespace-nowrap">Who is working on this</span><svg class="ml-[3px] w-[14px] h-[15px]"><use href="#doc"/></svg></div>

          <div class="absolute left-[425px] top-[90px] w-[111px] h-[22px] border border-black bg-[#c5b8de] shadow-[1px_1px_0_#808080] pl-[3px] flex items-center text-[10.5px]"><span class="whitespace-nowrap">A group in Cambridge</span></div>
          <div class="absolute left-[552px] top-[90px] w-[104px] h-[22px] border border-black bg-[#c5b8de] shadow-[1px_1px_0_#808080] pl-[3px] flex items-center text-[10.7px]"><span class="whitespace-nowrap">A group at Berkeley</span></div>
          <div class="absolute left-[671px] top-[90px] w-[21px] h-[22px] border border-black bg-[#c5b8de] shadow-[1px_1px_0_#808080] pl-[3px] flex items-center text-[10.5px]"><span class="whitespace-nowrap">Us</span></div>

          <!-- Map scrollbar -->
          <div class="w-[17px] mr-[1px] h-full flex flex-col relative z-10 bg-[#f2f5fb]">
            <div class="h-[16px] mt-[1px] rounded-[2px] border border-[#b8ccec] bg-[#c2d5f6] flex items-center justify-center text-[#3a5a90]"><svg class="w-[9px] h-[6px]"><use href="#chev-u"/></svg></div>
            <div class="mt-[7px] flex-1 mx-[1px] rounded-[2px] bg-[linear-gradient(90deg,#a8c0f0,#c0d4f8)] flex items-center justify-center"><div class="w-[7px] h-[7px] border-y-2 border-double border-[#e8f0fc]"></div></div>
            <div class="h-[17px] rounded-[2px] border border-[#dcdcd0] bg-[#ebebe0] flex items-center justify-center text-[#c8c8bc]"><svg class="w-[9px] h-[6px]"><use href="#chev-d"/></svg></div>
          </div>
        </div>
      </div>

      <!-- Properties -->
      <div class="w-[197px] shrink-0 ml-[2px] flex flex-col">
        <div class="h-[22px] shrink-0 flex items-center pl-[4px] pr-[7px] bg-[linear-gradient(#bcd6f4,#d3e4f9)] font-bold text-[12px] text-[#1d3f8f]">
          <span class="flex-1">Properties</span>
          <svg class="w-[8px] h-[9px]"><use href="#pin"/></svg>
          <svg class="ml-[7px] w-[8px] h-[8px]"><use href="#x"/></svg>
        </div>
        <div class="h-[707px] border-t border-l border-[#7c7c72] border-r border-r-[#eef4fc] bg-[#f8f8f8] flex flex-col overflow-hidden">

          <div class="h-[21px] shrink-0 px-[4px] bg-[#b6d6f6]"><div class="h-[19px] border-b border-[#a0a0a0] flex items-center pl-[3px]"><svg class="w-[8px] h-[5px]"><use href="#tri-d"/></svg><span class="ml-[3px] text-[11px]">Item info</span></div></div>
          <div class="h-[21px] shrink-0 px-[4px] bg-[#cfe0f8]"><div class="h-[20px] border-b border-[#a0a0a0] flex items-center pl-[14px]"><svg class="w-[5px] h-[9px]"><use href="#tri-r"/></svg><span class="ml-[5px] text-[11px]">Item Properties</span></div></div>
          <div class="h-[21px] shrink-0 px-[4px] bg-[#cfe0f8]"><div class="h-[20px] border-b border-[#a0a0a0] flex items-center pl-[14px]"><svg class="w-[8px] h-[5px]"><use href="#tri-d"/></svg><span class="ml-[3px] text-[11px]">Filled fields: 3</span></div></div>

          <div class="h-[71px] shrink-0 bg-[#e8e8e8] border-l border-[#b8b8b8]">
            <div class="h-[33px] flex border-b border-dotted border-[#a0a0a0]"><div class="w-[98px] pl-[22px] pt-[4px] border-r border-[#a0a0a0] text-[11px]">Item</div><div class="flex-1 pl-[2px] leading-[14px] pt-[2px] text-[11px]">Should we do it? yes or no</div></div>
            <div class="h-[19px] flex items-center border-b border-dotted border-[#a0a0a0]"><div class="w-[98px] h-full flex items-center pl-[22px] border-r border-[#a0a0a0] text-[11px]">ItemColor</div><div class="flex-1 text-center text-[11px]">Moss</div></div>
            <div class="h-[19px] flex items-center"><div class="w-[98px] h-full flex items-center pl-[22px] border-r border-[#a0a0a0] text-[11px]">ItemHasHTML</div><div class="flex-1 flex justify-center"><svg class="w-[13px] h-[13px]"><use href="#check"/></svg></div></div>
          </div>

          <div class="h-[21px] shrink-0 px-[4px] bg-[#cfe0f8]"><div class="h-[20px] border-b border-[#a0a0a0] flex items-center pl-[14px]"><svg class="w-[8px] h-[5px]"><use href="#tri-d"/></svg><span class="ml-[3px] text-[11px]">Parents: 3</span></div></div>

          <div class="h-[19px] shrink-0 flex items-center border-b border-dotted border-[#a0a0a0] pl-[12px] font-bold text-[11px]"><svg class="w-[8px] h-[5px]"><use href="#tri-d"/></svg><span class="ml-[2px]">Preliminary work</span></div>
          <div class="h-[19px] shrink-0 flex items-center border-b border-dotted border-[#a0a0a0] pl-[33px] whitespace-nowrap text-[10.5px]">Example: project Cloning Dolly</div>
          <div class="h-[19px] shrink-0 flex items-center border-b border-dotted border-[#a0a0a0] pl-[12px] text-[11px]"><svg class="w-[8px] h-[5px]"><use href="#tri-d"/></svg><span class="ml-[2px]">Yes it is</span></div>
          <div class="h-[19px] shrink-0 flex items-center border-b border-dotted border-[#a0a0a0] pl-[27px] text-[11px]"><svg class="w-[5px] h-[9px]"><use href="#tri-r"/></svg><span class="ml-[1px]">Is is technically possible ?</span></div>
          <div class="h-[19px] shrink-0 flex items-center border-b border-dotted border-[#a0a0a0] pl-[12px] text-[11px]"><svg class="w-[8px] h-[5px]"><use href="#tri-d"/></svg><span class="ml-[2px]">Yes we have</span></div>
          <div class="h-[19px] shrink-0 flex items-center pl-[27px] text-[11px]"><svg class="w-[5px] h-[9px]"><use href="#tri-r"/></svg><span class="ml-[1px]">Now?</span></div>

          <div class="h-[21px] shrink-0 px-[4px] bg-[#cfe0f8]"><div class="h-[20px] border-b border-[#a0a0a0] flex items-center pl-[14px]"><svg class="w-[8px] h-[5px]"><use href="#tri-d"/></svg><span class="ml-[3px] text-[11px]">Siblings: 3</span></div></div>
          <div class="h-[19px] shrink-0 flex items-center border-b border-dotted border-[#a0a0a0] pl-[23px] text-[10.8px] whitespace-nowrap">Do we have the money to do it ?</div>
          <div class="h-[19px] shrink-0 flex items-center border-b border-dotted border-[#a0a0a0] pl-[23px] text-[11px]">Is is technically possible ?</div>
          <div class="h-[19px] shrink-0 flex items-center pl-[23px] text-[11px] text-[#0000f0]">Should we do it? yes or no</div>
          <div class="h-[21px] shrink-0 px-[4px] bg-[#cfe0f8]"><div class="h-[20px] border-b border-[#a0a0a0] flex items-center pl-[14px]"><svg class="w-[8px] h-[5px]"><use href="#tri-d"/></svg><span class="ml-[3px] text-[11px]">Children: 2</span></div></div>
          <div class="h-[19px] shrink-0 flex items-center border-b border-dotted border-[#a0a0a0] pl-[23px] text-[11px] whitespace-nowrap overflow-hidden">Yes, nothing should stop the ad...</div>
          <div class="h-[19px] shrink-0 flex items-center pl-[23px] text-[11px] whitespace-nowrap overflow-hidden">No, the risks of abuse are too gr...</div>
          <div class="h-[21px] shrink-0 px-[4px] bg-[#cfe0f8]"><div class="h-[20px] border-b border-[#a0a0a0] flex items-center pl-[14px]"><svg class="w-[5px] h-[9px]"><use href="#tri-r"/></svg><span class="ml-[5px] text-[11px]">Shown in 1 grids</span></div></div>
          <div class="h-[21px] shrink-0 px-[4px] bg-[#cfe0f8]"><div class="h-[20px] border-b border-[#a0a0a0] flex items-center pl-[14px]"><svg class="w-[5px] h-[9px]"><use href="#tri-r"/></svg><span class="ml-[5px] text-[11px]">Tagged items: 1</span></div></div>

          <div class="h-[21px] shrink-0 px-[4px] bg-[#b6d6f6]"><div class="h-[20px] border-b border-[#a0a0a0] flex items-center pl-[3px]"><svg class="w-[8px] h-[5px]"><use href="#tri-d"/></svg><span class="ml-[3px] text-[11px]">Forms...</span></div></div>

          <div class="h-[21px] shrink-0 px-[4px] bg-[#cfe0f8]"><div class="h-[20px] border-b border-[#a0a0a0] flex items-center pl-[14px]"><svg class="w-[5px] h-[9px]"><use href="#tri-r"/></svg><span class="ml-[5px] text-[11px]">GridForm</span></div></div>
          <div class="h-[21px] shrink-0 px-[4px] bg-[#cfe0f8]"><div class="h-[20px] border-b border-[#a0a0a0] flex items-center pl-[14px]"><svg class="w-[5px] h-[9px]"><use href="#tri-r"/></svg><span class="ml-[5px] w-[102px] text-[11px]">GTD</span><span class="h-full border-r border-dotted border-[#a0a0a0]"></span></div></div>
          <div class="h-[21px] shrink-0 px-[4px] bg-[#cfe0f8]"><div class="h-[20px] border-b border-[#a0a0a0] flex items-center pl-[14px]"><svg class="w-[5px] h-[9px]"><use href="#tri-r"/></svg><span class="ml-[5px] w-[102px] text-[11px]">Appointments</span><span class="h-full border-r border-dotted border-[#a0a0a0]"></span></div></div>
          <div class="h-[21px] shrink-0 px-[4px] bg-[#cfe0f8]"><div class="h-[20px] border-b border-[#a0a0a0] flex items-center pl-[14px]"><svg class="w-[5px] h-[9px]"><use href="#tri-r"/></svg><span class="ml-[5px] w-[102px] text-[11px]">Contact</span><span class="h-full border-r border-dotted border-[#a0a0a0]"></span></div></div>
          <div class="h-[21px] shrink-0 px-[4px] bg-[#cfe0f8]"><div class="h-[20px] border-b border-[#a0a0a0] flex items-center pl-[14px]"><svg class="w-[5px] h-[9px]"><use href="#tri-r"/></svg><span class="ml-[5px] w-[102px] text-[11px]">Call</span><span class="h-full border-r border-dotted border-[#a0a0a0]"></span></div></div>
          <div class="h-[21px] shrink-0 px-[4px] bg-[#cfe0f8]"><div class="h-[20px] border-b border-[#a0a0a0] flex items-center pl-[14px]"><svg class="w-[5px] h-[9px]"><use href="#tri-r"/></svg><span class="ml-[5px] w-[102px] text-[11px]">Finances</span><span class="h-full border-r border-dotted border-[#a0a0a0]"></span></div></div>
          <div class="h-[21px] shrink-0 px-[4px] bg-[#cfe0f8]"><div class="h-[20px] border-b border-[#a0a0a0] flex items-center pl-[14px]"><svg class="w-[5px] h-[9px]"><use href="#tri-r"/></svg><span class="ml-[5px] w-[102px] text-[11px]">Todo</span><span class="h-full border-r border-dotted border-[#a0a0a0]"></span></div></div>
          <div class="h-[21px] shrink-0 px-[4px] bg-[#cfe0f8]"><div class="h-[20px] border-b border-[#a0a0a0] flex items-center pl-[14px]"><svg class="w-[5px] h-[9px]"><use href="#tri-r"/></svg><span class="ml-[5px] w-[102px] text-[11px]">Work done</span><span class="h-full border-r border-dotted border-[#a0a0a0]"></span></div></div>
          <div class="h-[21px] shrink-0 px-[4px] bg-[#cfe0f8]"><div class="h-[20px] border-b border-[#a0a0a0] flex items-center pl-[14px]"><svg class="w-[5px] h-[9px]"><use href="#tri-r"/></svg><span class="ml-[5px] w-[102px] text-[11px]">Projects</span><span class="h-full border-r border-dotted border-[#a0a0a0]"></span></div></div>
          <div class="h-[21px] shrink-0 px-[4px] bg-[#cfe0f8]"><div class="h-[20px] border-b border-[#a0a0a0] flex items-center pl-[14px]"><svg class="w-[5px] h-[9px]"><use href="#tri-r"/></svg><span class="ml-[5px] w-[102px] text-[11px]">Invoice</span><span class="h-full border-r border-dotted border-[#a0a0a0]"></span></div></div>

          <div class="h-[21px] shrink-0 px-[4px] bg-[#b6d6f6]"><div class="h-[20px] border-b border-[#a0a0a0] flex items-center pl-[6px]"><svg class="w-[5px] h-[9px]"><use href="#tri-r"/></svg><span class="ml-[3px] w-[82px] text-[11px]">Available fields:</span><span class="h-full border-r border-dotted border-[#a0a0a0]"></span><svg class="ml-[17px] w-[13px] h-[13px]"><use href="#check"/></svg><span class="ml-[6px] text-[11px]">Tree View</span></div></div>
        </div>
      </div>
    </div>

    <!-- Status bar -->
    <div class="h-[21px] shrink-0 flex items-center bg-[linear-gradient(#c4dcf6,#9cc0ec)] text-[11px]">
      <div class="w-[625px] h-[20px] mt-[1px] bg-[#f4f6f8] flex items-center pl-[2px]">Lineage: Example: project Cloning Dolly</div>
      <div class="ml-[6px] w-[53px] h-[17px] bg-[#eef2f6] text-[#8a8a8a] flex items-center justify-center">00:00:00</div>
      <div class="ml-[4px] w-[53px] h-[17px] bg-[#eef2f6] text-[#8a8a8a] flex items-center justify-center">00:00:00</div>
      <div class="ml-[4px] w-[31px] h-[17px] bg-[#f4f6f8]"></div>
      <div class="ml-[3px] w-[27px] h-[17px] bg-[#e4e8ee] text-[#8a8a8a] flex items-center justify-center">OVR</div>
      <div class="ml-[4px] w-[62px] h-[17px] bg-[#f8f8f8] text-[#1a2a6a] flex items-center justify-center">2009-11-18</div>
      <div class="ml-[4px] w-[34px] h-[17px] bg-[#f8f8f8] text-[#1a2a6a] flex items-center justify-center">10:20</div>
      <div class="ml-auto self-end pr-[1px] pb-[2px] w-[10px] h-[10px] bg-[radial-gradient(#2a5aa0_1px,transparent_1px)] bg-[length:4px_4px]"></div>
    </div>
  </div>
</div>
</body>
</html>
